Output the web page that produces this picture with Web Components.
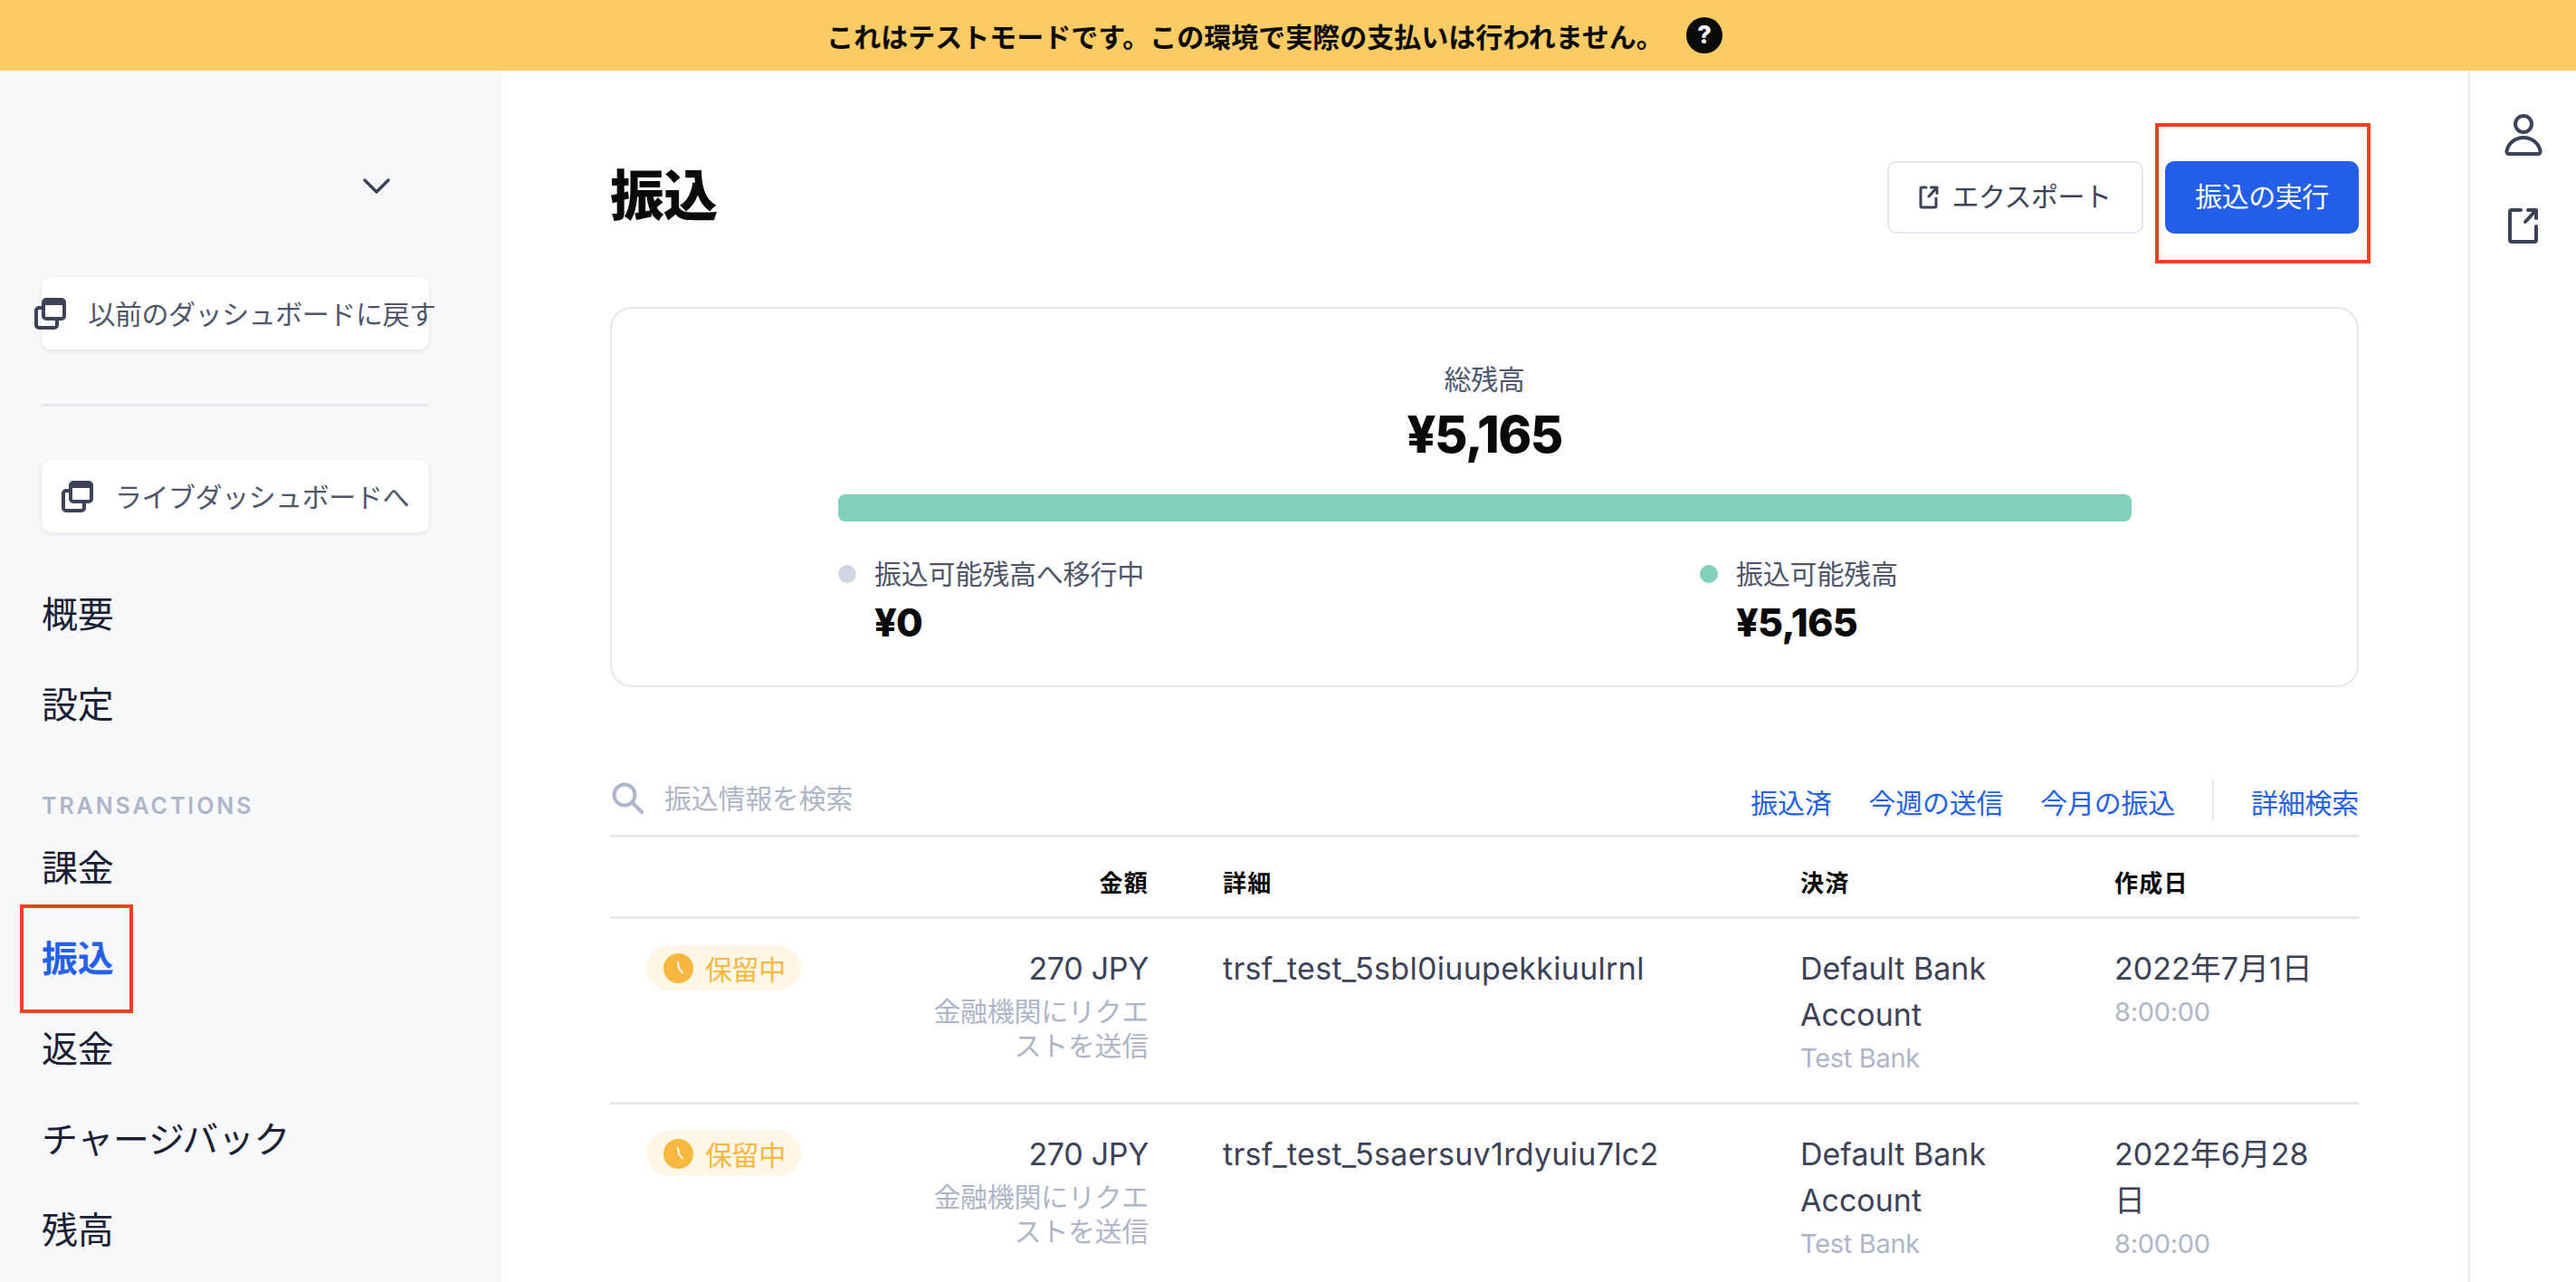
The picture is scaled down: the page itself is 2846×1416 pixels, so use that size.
<!DOCTYPE html>
<html lang="ja"><head><meta charset="utf-8"><title>振込</title>
<style>
html,body{margin:0;padding:0;height:100%;overflow:hidden;background:#fff}
body{font-family:Inter,"Noto Sans CJK JP",sans-serif;color:#3c4257;width:2846px;height:1416px}
</style></head><body>
<app-shell>
  <test-banner slot="banner">これはテストモードです。この環境で実際の支払いは行われません。</test-banner>
  <side-bar slot="side">
    <side-button>以前のダッシュボードに戻す</side-button>
    <side-button slot="second">ライブダッシュボードへ</side-button>
    <nav-item slot="nav">概要</nav-item>
    <nav-item slot="nav">設定</nav-item>
    <nav-heading slot="nav">TRANSACTIONS</nav-heading>
    <nav-item slot="nav">課金</nav-item>
    <nav-item slot="nav" active>振込</nav-item>
    <nav-item slot="nav">返金</nav-item>
    <nav-item slot="nav">チャージバック</nav-item>
    <nav-item slot="nav">残高</nav-item>
  </side-bar>
  <page-header slot="main" title-text="振込"></page-header>
  <balance-card slot="main"></balance-card>
  <filter-bar slot="main"></filter-bar>
  <transfer-table slot="main">
    <transfer-row amount="270 JPY" ident="trsf_test_5sbl0iuupekkiuulrnl" date="2022年7月1日"></transfer-row>
    <transfer-row amount="270 JPY" ident="trsf_test_5saersuv1rdyuiu7lc2" date="2022年6月28日"></transfer-row>
  </transfer-table>
  <icon-rail slot="rail"></icon-rail>
</app-shell>
<script>
function def(name,html){
  customElements.define(name,class extends HTMLElement{
    constructor(){super();this.attachShadow({mode:'open'});if(typeof html!=='function')this.shadowRoot.innerHTML=html;}
    connectedCallback(){if(typeof html==='function')this.shadowRoot.innerHTML=html(this);}
  });
}
const mark=`<span class="mark"></span>`;
const markCss=`.mark{position:absolute;box-sizing:border-box;border:4px solid #ee4124;pointer-events:none}`;

def('app-shell',`<style>
:host{display:flex;flex-direction:column;width:2846px;height:1416px;overflow:hidden}
.row{display:flex;flex:1;min-height:0}
.main{flex:1;min-width:0;box-sizing:border-box;padding:100px 121px 0 120px;display:flex;flex-direction:column}
</style><slot name="banner"></slot><div class="row"><slot name="side"></slot><div class="main"><slot name="main"></slot></div><slot name="rail"></slot></div>`);

def('test-banner',`<style>
:host{display:flex;align-items:center;justify-content:center;height:78px;box-sizing:border-box;padding-right:30px;background:#fbcb64;color:#0a0a0a;font-size:30px;font-weight:700;gap:25px;flex:none;letter-spacing:0}
svg{width:40px;height:40px;display:block}
</style><slot></slot><svg viewBox="0 0 40 40"><circle cx="20" cy="20" r="20" fill="#0a0a0a"/><text x="20" y="29" text-anchor="middle" font-size="27" font-weight="800" fill="#fff" font-family="Inter">?</text></svg>`);

def('side-bar',`<style>
:host{display:block;width:554px;flex:none;background:#f7f8fa;box-sizing:border-box;padding:0 80px 0 46px}
.chev{display:flex;justify-content:flex-end;height:228px;padding:119px 43px 0 0;box-sizing:border-box}
.chev svg{width:30px;height:18px;display:block}
.sep{height:3px;background:#e6e8ef;margin:60px 0 59px}
.nav{margin-top:38px;display:flex;flex-direction:column}
</style><div class="chev"><svg viewBox="0 0 30 18" fill="none" stroke="#3c4257" stroke-width="3.4" stroke-linecap="round" stroke-linejoin="round"><path d="M2 2l13 13L28 2"/></svg></div>
<slot></slot><div class="sep"></div><slot name="second"></slot><div class="nav"><slot name="nav"></slot></div>`);

def('side-button',`<style>
:host{display:flex;align-items:center;justify-content:center;gap:24px;height:80px;background:#fff;border-radius:10px;box-shadow:0 2px 5px rgba(60,66,87,.1),0 0 1px rgba(60,66,87,.08);font-size:30px;color:#4f566b;white-space:nowrap;letter-spacing:-.45px}
svg{width:35px;height:35px;flex:none;display:block}
span{margin-bottom:3px}
</style><svg viewBox="0 0 35 35" fill="none" stroke="#3c4257" stroke-width="4"><rect x="10" y="2" width="23" height="21" rx="3"/><path d="M10 3h23v5H10z" fill="#3c4257" stroke="none"/><path d="M10 11H5a3 3 0 0 0-3 3v16a3 3 0 0 0 3 3h17a3 3 0 0 0 3-3v-6"/></svg><span><slot></slot></span>`);

def('nav-item',`<style>
:host{display:flex;align-items:center;height:100px;font-size:40px;color:#1a1f36;position:relative;letter-spacing:-.3px;white-space:nowrap}
:host([active]){color:#2460e8;font-weight:700}
.mark{display:none}
:host([active]) .mark{display:block;left:-24px;top:-7px;width:125px;height:120px}
${markCss}
</style><slot></slot>${mark}`);

def('nav-heading',`<style>
:host{display:flex;align-items:flex-end;height:80px;font-size:25px;font-weight:600;line-height:32px;color:#aeb5c8;letter-spacing:2.9px}
</style><slot></slot>`);

def('page-header',h=>`<style>
:host{display:flex;align-items:center;height:80px;flex:none}
h1{margin:0 0 3px;font-size:60px;font-weight:900;color:#0a0a0a;flex:1;letter-spacing:-1px;line-height:77px}
.btn{box-sizing:border-box;height:80px;border-radius:10px;display:flex;align-items:center;justify-content:center;font-size:30px;white-space:nowrap;letter-spacing:-.5px}
.btn span{margin-bottom:7px}
.export{width:283px;border:2px solid #e3e8ee;color:#3c4257;gap:14px;margin-right:24px;background:#fff}
.export svg{width:22px;height:26px;display:block}
.wrap{position:relative}
.run{width:214px;background:#235ee8;color:#fff}
.mark{left:-11px;top:-42px;width:238px;height:155px}
${markCss}
</style><h1>${h.getAttribute('title-text')}</h1><div class="btn export"><svg viewBox="0 0 22 26" fill="none" stroke="#3c4257" stroke-width="3" stroke-linecap="round" stroke-linejoin="round"><path d="M8 2H3.5A1.5 1.5 0 0 0 2 3.5v19A1.5 1.5 0 0 0 3.5 24h14a1.5 1.5 0 0 0 1.5-1.5V14"/><path d="M11 12l9-10M13.5 2H20v6.500"/></svg><span>エクスポート</span></div><div class="wrap"><div class="btn run"><span>振込の実行</span></div>${mark}</div>`);

def('balance-card',`<style>
:host{display:block;box-sizing:border-box;height:420px;margin-top:81px;border:2px solid #e3e8ee;border-radius:24px;padding:56px 249px 0 249px;flex:none}
.label{text-align:center;font-size:30px;line-height:44px;color:#4f566b;letter-spacing:-.4px}
.total{text-align:center;font-size:56px;font-weight:800;line-height:72px;color:#0a0a0a;letter-spacing:-1.5px;margin-top:3px}
.bar{height:30px;border-radius:8px;background:#82cfbb;margin:30px 0 0 1px}
.legends{display:flex;margin:39px 0 0 1px}
legend-item{flex:none}
legend-item:first-child{width:952px}
</style><div class="label">総残高</div><div class="total">¥5,165</div><div class="bar"></div>
<div class="legends"><legend-item dot="#d2d6e3" amount="¥0">振込可能残高へ移行中</legend-item><legend-item dot="#82cfbb" amount="¥5,165">振込可能残高</legend-item></div>`);

def('legend-item',h=>`<style>
:host{display:grid;grid-template-columns:20px auto;column-gap:20px;align-items:center}
i{width:20px;height:20px;border-radius:50%;display:block}
.t{font-size:30px;line-height:38px;color:#4f566b;letter-spacing:-.2px}
.a{grid-column:2;font-size:43px;font-weight:800;line-height:50px;color:#0a0a0a;margin-top:9px;letter-spacing:-.8px}
</style><i style="background:${h.getAttribute('dot')}"></i><div class="t"><slot></slot></div><div class="a">${h.getAttribute('amount')}</div>`);

def('filter-bar',`<style>
:host{display:flex;align-items:center;height:82px;margin-top:81px;border-bottom:3px solid #e6e9ef;flex:none;font-size:30px;letter-spacing:-.25px}
svg{width:35px;height:35px;display:block;margin:0 25px 0 2px}
.ph{color:#aeb5c8;flex:1;margin-bottom:2px;margin-left:-2px}
a{color:#2460e8;text-decoration:none;margin:7px 0 0 41px}
.v{width:2px;height:46px;background:#e6e9ef;margin:4px 0 0 41px}
</style><svg viewBox="0 0 35 35" fill="none" stroke="#aeb5c8" stroke-width="4" stroke-linecap="round"><circle cx="14" cy="14" r="11.500"/><path d="M23 23l10 10"/></svg><span class="ph">振込情報を検索</span><a>振込済</a><a>今週の送信</a><a>今月の振込</a><span class="v"></span><a>詳細検索</a>`);

const cols='356px 239px 82px 638px 347px 271px';
def('transfer-table',`<style>
:host{display:block;flex:none}
.head{display:grid;grid-template-columns:${cols};box-sizing:border-box;height:90px;padding-top:10px;align-items:center;border-bottom:3px solid #e6e9ef;font-size:26px;font-weight:700;color:#0a0a0a;letter-spacing:1.2px}
.r{text-align:right}
</style><div class="head"><span></span><span class="r">金額</span><span></span><span>詳細</span><span>決済</span><span>作成日</span></div><slot></slot>`);

def('transfer-row',h=>`<style>
:host{display:grid;grid-template-columns:${cols};box-sizing:border-box;height:205px;padding-top:29px;border-bottom:3px solid #e6e9ef;align-items:start;font-size:34px;color:#3c4257;letter-spacing:0}
.c{line-height:51px}
.sub{font-size:30px;color:#aeb5c8;letter-spacing:-.3px;line-height:37.500px}
.amt{text-align:right;letter-spacing:-.3px}
.id{letter-spacing:.3px}
.pay{width:300px}
.date{width:232px}
.time{font-size:29px;line-height:46px;color:#aeb5c8}
.note{margin-top:4px}
.bank{line-height:46px;font-size:29px}
status-pill{margin-left:40px}
</style><div><status-pill>保留中</status-pill></div>
<div class="c amt">${h.getAttribute('amount')}<div class="sub note">金融機関にリクエストを送信</div></div><div></div>
<div class="c id">${h.getAttribute('ident')}</div>
<div class="c pay">Default Bank Account<div class="sub bank">Test Bank</div></div>
<div class="c date">${h.getAttribute('date')}<div class="sub time">8:00:00</div></div>`);

def('status-pill',`<style>
:host{display:inline-flex;align-items:center;height:50px;box-sizing:border-box;padding:0 17px 0 19px;gap:13px;border-radius:25px;background:#fff6e6;color:#f8b73f;font-size:30px;letter-spacing:-.4px;white-space:nowrap}
svg{width:33px;height:33px;display:block}
</style><svg viewBox="0 0 33 33"><circle cx="16.500" cy="16.500" r="16.500" fill="#f8b73f"/><path d="M16 10l1 6.500 4 5" fill="none" stroke="#fff" stroke-width="2" stroke-linecap="round" stroke-linejoin="round"/></svg><slot></slot>`);

def('icon-rail',`<style>
:host{display:flex;flex-direction:column;align-items:center;width:119px;flex:none;box-sizing:border-box;border-left:2px solid #e6e9ef;padding-top:48px;gap:57px}
svg{display:block}
</style><svg width="42" height="46" viewBox="0 0 42 46" fill="none" stroke="#3c4257" stroke-width="4" stroke-linejoin="round"><circle cx="21" cy="11" r="9"/><path d="M5 44a2.500 2.500 0 0 1-2.500-3C4 32 12 26 21 26s17 6 18.500 15a2.500 2.500 0 0 1-2.500 3z"/></svg>
<svg width="34" height="40" viewBox="0 0 34 40" fill="none" stroke="#3c4257" stroke-width="4" stroke-linecap="round" stroke-linejoin="round"><path d="M14 3H4a2 2 0 0 0-2 2v31a2 2 0 0 0 2 2h25a2 2 0 0 0 2-2V21"/><path d="M19 16L31 3M22 3h9v9"/></svg>`);
</script>
</body></html>
